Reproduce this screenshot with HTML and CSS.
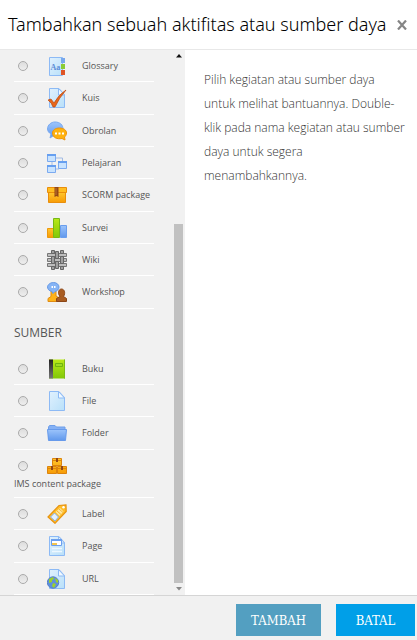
FILE: index.html
```html
<!DOCTYPE html>
<html lang="id">
<head>
  <meta charset="UTF-8">
  <meta name="viewport" content="width=device-width, initial-scale=1.0">
  <title>Tambahkan sebuah aktifitas atau sumber daya</title>
  <link rel="stylesheet" href="styles.css">
</head>
<body>
  <!-- Shared sheet of paper and gradients -->
  <svg class="defs" aria-hidden="true">
    <defs>
      <linearGradient id="paper" x1="0" y1="0" x2="1" y2="1"><stop offset="0" stop-color="#e0f1fe"/><stop offset="1" stop-color="#b9e0f9"/></linearGradient>
      <linearGradient id="blue" x1="0" y1="0" x2="0" y2="1"><stop offset="0" stop-color="#9cc4fb"/><stop offset="1" stop-color="#6098ec"/></linearGradient>
      <linearGradient id="orange" x1="0" y1="0" x2="0" y2="1"><stop offset="0" stop-color="#ffc62e"/><stop offset="1" stop-color="#f79b05"/></linearGradient>
      <linearGradient id="green" x1="0" y1="0" x2="0" y2="1"><stop offset="0" stop-color="#b9e818"/><stop offset="1" stop-color="#82c808"/></linearGradient>
      <linearGradient id="spine" x1="0" y1="0" x2="0" y2="1"><stop offset="0" stop-color="#222"/><stop offset="1" stop-color="#777"/></linearGradient>
    </defs>
    <symbol id="sheet" viewBox="0 0 20 20">
      <path d="M2.500 .5h9.500l5.500 6v13h-15z" fill="url(#paper)" stroke="#8dbaf5"/>
      <path d="M11.500 .5v6.500h6z" fill="#f1f9ff" stroke="#8dbaf5"/>
    </symbol>
  </svg>

  <div class="chooser">
    <header class="chooser-header">
      <h1>Tambahkan sebuah aktifitas atau sumber daya</h1>
      <button class="close" type="button" aria-label="Tutup">
        <svg viewBox="0 0 10 10"><path d="M1 0.500L9 9.500M9 0.500L1 9.500" stroke="#858585" stroke-width="2.200"/></svg>
      </button>
    </header>

    <main class="chooser-body">
      <div class="sidebar">
        <div class="modules">
          <label class="module"><input type="radio" name="module">
            <svg class="icon" viewBox="0 0 20 20"><path d="M2.500 1.500h13v18h-13z" fill="url(#paper)" stroke="#8dbaf5"/><text x="3.500" y="14" class="aa">Aa</text><path d="M14 2h4v5h-4z" fill="#78a8ed"/><path d="M14 8h4v5h-4z" fill="#8bcb35"/><path d="M14 14h4v5h-4z" fill="#df5425"/></svg>
            <span>Glossary</span></label>
          <label class="module"><input type="radio" name="module">
            <svg class="icon" viewBox="0 0 20 20"><use href="#sheet"/><path d="M1 12l3-1 3 4Q12 6 19 2q-7 8-11 17H6q-1-4-5-7z" fill="#e8671b" stroke="#b94c16" stroke-width=".7"/></svg>
            <span>Kuis</span></label>
          <label class="module"><input type="radio" name="module">
            <svg class="icon" viewBox="0 0 20 20"><path d="M8 1c5 0 8 3 8 7s-3 6-8 6l-2 1-3 2 1-4C2 12 .5 10 .5 8 .5 4 4 1 8 1z" fill="url(#blue)" stroke="#7aaaf0"/><path d="M12.500 7c4 0 7 2 7 5 0 2-1 3-2 4l.5 3-3-1.500c-5 1-9.500-1-9.500-5.500 0-3 3-5 7-5z" fill="#ffb20e" stroke="#ee930a"/><path d="M8 11.500h2v2H8zM11.500 11.500h2v2h-2zM15 11.500h2v2h-2z" fill="#fff"/></svg>
            <span>Obrolan</span></label>
          <label class="module"><input type="radio" name="module">
            <svg class="icon" viewBox="0 0 20 20"><path d="M9 5h6.500v4M5 9v4M8 16h4v-4" fill="none" stroke="#a1bbe4"/><g fill="#c8e3ff" stroke="#7baaf0"><path d="M.5 1.500h8v7h-8zM11.500 8.500h8v7h-8zM.5 12.500h8v7h-8z"/></g><path d="M0 1h9v2H0zM11 8h9v2h-9zM0 12h9v2H0z" fill="#669ff0"/></svg>
            <span>Pelajaran</span></label>
          <label class="module"><input type="radio" name="module">
            <svg class="icon" viewBox="0 0 20 20"><path d="M1.500 7.500h17v10h-17z" fill="url(#orange)" stroke="#e98e0b"/><path d="M.5 2.500h19v5H.5z" fill="#ffbd20" stroke="#e98e0b"/><path d="M7.500 2h4v10l-2-1-2 1z" fill="#934715"/><path d="M9 3v7" stroke="#bd7435"/></svg>
            <span>SCORM package</span></label>
          <label class="module"><input type="radio" name="module">
            <svg class="icon" viewBox="0 0 20 20"><path d="M.5 10.500h6v9h-6z" fill="url(#orange)" stroke="#ed980d"/><path d="M13.500 7.500h6v12h-6z" fill="url(#blue)" stroke="#6a9eed"/><path d="M6.500 .5h6v19h-6z" fill="url(#green)" stroke="#76b817"/></svg>
            <span>Survei</span></label>
          <label class="module"><input type="radio" name="module">
            <svg class="icon" viewBox="0 0 20 20"><g fill="#bdbdbd" stroke="#777"><path d="M.5 3.500h8v3h-8zM11.500 3.500h8v3h-8zM.5 8.500h4v3h-4zM5.500 8.500h8v3h-8zM15.500 8.500h4v3h-4zM.5 13.500h8v3h-8zM11.500 13.500h8v3h-8z"/></g><g fill="#a0a0a0" stroke="#666"><path d="M4.500 .5h3v3h-3zM8.500 1.500h3v7h-3zM13.500 .5h3v3h-3zM4.500 6.500h3v7h-3zM13.500 6.500h3v7h-3zM8.500 11.500h3v7h-3zM4.500 16.500h3v3h-3zM13.500 16.500h3v3h-3z"/></g></svg>
            <span>Wiki</span></label>
          <label class="module"><input type="radio" name="module">
            <svg class="icon" viewBox="0 0 20 20"><path d="M1 19.500v-3l3-2V8h5v6l3 2v3.500z" fill="#ffb318" stroke="#e08c12"/><path d="M9.500 19.500v-3l3.500-2c-3-4-1-7.500 1.500-7.500s4.500 3.500 2 7.500l3 2v3z" fill="#a95d22" stroke="#8c4617"/><path d="M6.500 .5c3 0 5.500 2 5.500 4.500s-2 4-4 4.500l-2 2-1-2C2 9 .5 7 .5 5S3 .5 6.500 .5z" fill="#86b4f5" stroke="#6799e5"/><path d="M4.500 4h1.500v2H4.500zM7 4h1.500v2H7z" fill="#fff"/></svg>
            <span>Workshop</span></label>

          <h2>SUMBER</h2>

          <label class="module"><input type="radio" name="module">
            <svg class="icon" viewBox="0 0 20 20"><path d="M2 .5h16v19H2z" fill="url(#green)"/><path d="M17.500 .5v19" stroke="#7db918"/><path d="M2 .5h4v19H2z" fill="url(#spine)"/><path d="M8.500 4.500h7v3h-7z" fill="#9fdb22" stroke="#6fb50d"/></svg>
            <span>Buku</span></label>
          <label class="module"><input type="radio" name="module">
            <svg class="icon" viewBox="0 0 20 20"><use href="#sheet"/></svg>
            <span>File</span></label>
          <label class="module"><input type="radio" name="module">
            <svg class="icon" viewBox="0 0 20 20"><path d="M1.500 16V4l1-1.500H8L9.500 4h8.500v5z" fill="#85b1f5" stroke="#6f9fe9"/><path d="M.5 6.500h19l-1 11h-17z" fill="url(#blue)" stroke="#679aeb"/></svg>
            <span>Folder</span></label>
          <label class="module"><input type="radio" name="module">
            <svg class="icon" viewBox="0 0 20 20"><g fill="url(#orange)" stroke="#dc840d"><path d="M5.500 2.500h9v7h-9zM.5 10.500h9v7h-9zM10.500 10.500h9v7h-9z"/></g><path d="M5 4.500h10M0 12.500h20" stroke="#dc840d"/><path d="M9 2h2v4H9zM4 10h2v4H4zM14 10h2v4h-2z" fill="#934715"/></svg>
            <span>IMS content package</span></label>
          <label class="module"><input type="radio" name="module">
            <svg class="icon" viewBox="0 0 20 20"><path d="M1 13L12 1.500 19 .8l.2 6.700L8 19.300z" fill="#ffbd27" stroke="#e79310" stroke-width="1.200"/><path d="M3.500 13l4.500 4 3.500-4L7.500 9z" fill="#e3f0ff" stroke="#84afea"/><path d="M8.500 8l4 4 4-4.500L13 4z" fill="#ffe7a1"/><path d="M10 7l4 3.500M12 5l4 3.500" stroke="#f4b637"/><circle cx="16.500" cy="3.200" r="1.200" fill="#fff"/></svg>
            <span>Label</span></label>
          <label class="module"><input type="radio" name="module">
            <svg class="icon" viewBox="0 0 20 20"><use href="#sheet"/><path d="M4.500 3.500h10v6h-10z" fill="#fff" stroke="#6b9fee"/><path d="M4 3h11v2H4z" fill="#6b9fee"/><path d="M5 7h5v2H5z" fill="#f5c54c"/><path d="M5 12.500h10M5 15.500h10" stroke="#eef8ff" stroke-width="1.500"/></svg>
            <span>Page</span></label>
          <label class="module"><input type="radio" name="module">
            <svg class="icon" viewBox="0 0 20 20"><use href="#sheet"/><circle cx="6" cy="13.500" r="5.700" fill="#5f8fdd" stroke="#5580c9"/><path d="M2 10l4-2 1 2-2 1v2l-3 1zM8 9l3 2v3l-2-1zM6 14l3 1-2 4-2-2z" fill="#9ed22b"/></svg>
            <span>URL</span></label>
        </div>

        <div class="scrollbar" aria-hidden="true">
          <svg class="arrow" viewBox="0 0 6 4"><path d="M3 0l3 3.500H0z" fill="#111"/></svg>
          <div class="track"><div class="thumb"></div></div>
          <svg class="arrow" viewBox="0 0 6 4"><path d="M0 0h6L3 3.500z" fill="#888"/></svg>
        </div>
      </div>

      <p class="help">Pilih kegiatan atau sumber daya untuk melihat bantuannya. Double-klik pada nama kegiatan atau sumber daya untuk segera menambahkannya.</p>
    </main>

    <footer class="chooser-footer">
      <button class="btn btn-add" type="button">TAMBAH</button>
      <button class="btn btn-cancel" type="button">BATAL</button>
    </footer>
  </div>
</body>
</html>
```
FILE: styles.css
```css
* { box-sizing: border-box; margin: 0; padding: 0; }

body {
  background: #fff;
  color: #555;
  font-family: "Open Sans", "Noto Sans", sans-serif;
}

.defs {
  position: absolute;
  width: 0;
  height: 0;
}

.chooser {
  display: flex;
  flex-direction: column;
  min-height: 100vh;
}

/* Header */
.chooser-header {
  display: flex;
  align-items: center;
  justify-content: space-between;
  padding: 10px 10px 10px 8px;
  border-bottom: 1px solid #e8e8e8;
}
.chooser-header h1 {
  color: #000;
  font-family: "Noto Sans", "Open Sans", sans-serif;
  font-size: 18px;
  font-weight: 300;
  line-height: 29px;
  white-space: nowrap;
}
.close {
  flex: none;
  width: 10px;
  height: 10px;
  border: 0;
  background: none;
  cursor: pointer;
}
.close svg { display: block; }

/* Module list */
.chooser-body {
  display: flex;
  flex: 1;
}
.sidebar {
  display: flex;
  flex: none;
  justify-content: space-between;
  width: 185px;
  background: #f1f1f1;
}
.modules {
  display: flex;
  flex-direction: column;
  width: 140px;
  margin-left: 14px;
}
.modules h2 {
  padding: 14px 0 10px;
  font-size: 12px;
  font-weight: 400;
  line-height: 20px;
}
.module {
  display: flex;
  flex: 1 0 auto;
  flex-wrap: wrap;
  align-items: center;
  align-content: center;
  padding: 6px 0 5px;
  border-bottom: 1px solid #fff;
  font-size: 9px;
  line-height: 16px;
  white-space: nowrap;
}
.module input {
  appearance: none;
  width: 10px;
  height: 10px;
  margin: 0 19px 0 4px;
  border: 1px solid #aaa;
  border-radius: 50%;
  background: linear-gradient(#ddd, #eee);
}
.module input:checked { background: #888; }
.icon {
  width: 20px;
  height: 20px;
  margin-right: 15px;
}
.aa {
  fill: #5c8dd6;
  font: bold 8px "Liberation Serif", serif;
}

/* Scrollbar */
.scrollbar {
  display: flex;
  flex-direction: column;
  align-items: center;
  width: 9px;
  margin-right: 2px;
  padding: 4px 0;
}
.arrow {
  width: 6px;
  height: 4px;
}
.track {
  display: flex;
  flex: 1;
  align-items: flex-end;
  align-self: stretch;
  margin: 4px 0;
}
.thumb {
  width: 100%;
  height: 69%;
  background: #c1c1c1;
}

/* Help text */
.help {
  flex: 1;
  padding: 18px 10px 0 19px;
  color: #333;
  font-size: 12px;
  font-weight: 300;
  line-height: 24px;
}

/* Buttons */
.chooser-footer {
  display: flex;
  justify-content: flex-end;
  gap: 15px;
  padding: 8px 2px 4px;
  border-top: 1px solid #d5d5d5;
  background: #f1f1f1;
}
.btn {
  height: 32px;
  border: 0;
  color: #fff;
  font-family: "DejaVu Serif Condensed", "DejaVu Serif", serif;
  font-size: 13px;
  cursor: pointer;
}
.btn-add {
  width: 85px;
  background: #539fc1;
}
.btn-cancel {
  width: 79px;
  background: #009fe8;
}
```
